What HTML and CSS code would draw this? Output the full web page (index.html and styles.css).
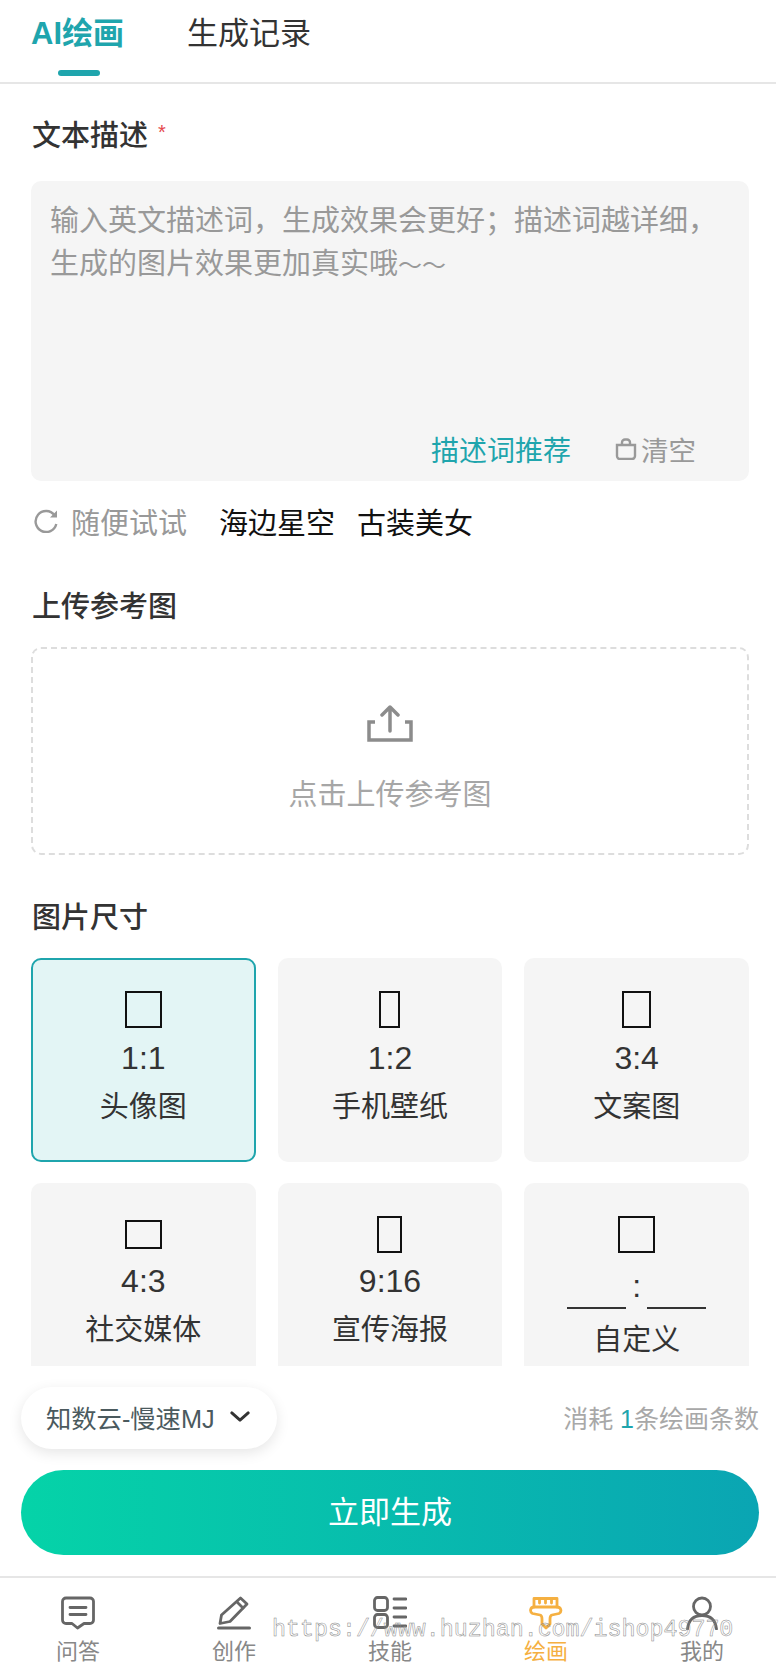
FILE: index.html
```html
<!DOCTYPE html>
<html lang="zh-CN">
<head>
    <meta charset="UTF-8">
    <meta name="viewport" content="width=device-width, initial-scale=1.0">
    <title>AI绘画</title>
    <link rel="stylesheet" href="styles.css">
</head>
<body>
    <div class="page">
        <div class="top-tabs">
            <div class="top-tab active">AI绘画</div>
            <div class="top-tab">生成记录</div>
        </div>

        <div class="content">
            <div class="field-label">文本描述 <span class="required">*</span></div>
            <div class="prompt-box">
                <div class="placeholder">输入英文描述词，生成效果会更好；描述词越详细，生成的图片效果更加真实哦<span class="tilde">～～</span></div>
                <div class="prompt-actions">
                    <span class="recommend">描述词推荐</span>
                    <span class="clear">
                        <svg width="22" height="22" viewBox="0 0 22 22" fill="none" stroke="#999" stroke-width="2.400">
                            <path d="M2 7H20V18A3 3 0 0 1 17 21H5A3 3 0 0 1 2 18Z"/>
                            <path d="M7 7V4.500A3 3 0 0 1 10 1.500H12A3 3 0 0 1 15 4.500V7"/>
                        </svg>
                        清空
                    </span>
                </div>
            </div>

            <div class="try-row">
                <svg class="try-icon" width="24" height="24" viewBox="0 0 24 24" fill="none" stroke="#999" stroke-width="2.400">
                    <path d="M20.500 6.200A10.500 10.500 0 1 0 22.300 15"/>
                    <path d="M23 1.500V8.500H16Z" fill="#999" stroke="none"/>
                </svg>
                <span class="try-label">随便试试</span>
                <span class="try-item">海边星空</span>
                <span class="try-item">古装美女</span>
            </div>

            <div class="field-label upload-label">上传参考图</div>
            <div class="upload-box">
                <svg width="46" height="37" viewBox="0 0 46 37" fill="none" stroke="#8c8c8c" stroke-width="3.500" stroke-linecap="round" stroke-linejoin="round">
                    <path d="M8 17H2V35H44V17H38" stroke-linecap="butt" stroke-linejoin="miter"/>
                    <path d="M23 26V2M15 10L23 2L31 10"/>
                </svg>
                <div class="upload-text">点击上传参考图</div>
            </div>

            <div class="field-label size-label">图片尺寸</div>
            <div class="size-grid">
                <div class="size-card selected">
                    <div class="shape-wrap"><div class="shape s1-1"></div></div>
                    <div class="ratio">1:1</div>
                    <div class="size-name">头像图</div>
                </div>
                <div class="size-card">
                    <div class="shape-wrap"><div class="shape s1-2"></div></div>
                    <div class="ratio">1:2</div>
                    <div class="size-name">手机壁纸</div>
                </div>
                <div class="size-card">
                    <div class="shape-wrap"><div class="shape s3-4"></div></div>
                    <div class="ratio">3:4</div>
                    <div class="size-name">文案图</div>
                </div>
                <div class="size-card lower">
                    <div class="shape-wrap"><div class="shape s4-3"></div></div>
                    <div class="ratio">4:3</div>
                    <div class="size-name">社交媒体</div>
                </div>
                <div class="size-card lower">
                    <div class="shape-wrap"><div class="shape s9-16"></div></div>
                    <div class="ratio">9:16</div>
                    <div class="size-name">宣传海报</div>
                </div>
                <div class="size-card">
                    <div class="shape-wrap"><div class="shape s1-1"></div></div>
                    <div class="custom-ratio">
                        <span class="custom-input"></span>
                        <span class="custom-colon">:</span>
                        <span class="custom-input"></span>
                    </div>
                    <div class="size-name custom-name">自定义</div>
                </div>
            </div>
        </div>

        <div class="generate-panel">
            <div class="panel-row">
                <div class="model-select">
                    <span>知数云-慢速MJ</span>
                    <svg width="20" height="12" viewBox="0 0 22 13" fill="none" stroke="#333" stroke-width="3.200" stroke-linecap="round" stroke-linejoin="round">
                        <path d="M2 2L11 10L20 2"/>
                    </svg>
                </div>
                <div class="cost">消耗 <span class="cost-num">1</span>条绘画条数</div>
            </div>
            <div class="generate-btn">立即生成</div>
        </div>

        <div class="bottom-nav">
            <div class="nav-item">
                <svg width="34" height="34" viewBox="0 0 34 34" fill="none" stroke="#666" stroke-width="2.800" stroke-linejoin="round" stroke-linecap="round">
                    <path d="M5 2H29A3.500 3.500 0 0 1 32.500 5.500V24A3.500 3.500 0 0 1 29 27.500H23L16.500 32L11 27.500H5A3.500 3.500 0 0 1 1.500 24V5.500A3.500 3.500 0 0 1 5 2Z"/>
                    <path d="M9 11.500H25M9 18.500H25"/>
                </svg>
                <span>问答</span>
            </div>
            <div class="nav-item">
                <svg width="34" height="34" viewBox="0 0 34 34" fill="none" stroke="#666" stroke-width="2.800" stroke-linejoin="round" stroke-linecap="round">
                    <path d="M23.500 2L30 8L13 25.500L3 27.500L4.500 19Z"/>
                    <path d="M20 6L26 12"/>
                    <path d="M1.500 32H32.500" stroke-width="3"/>
                </svg>
                <span>创作</span>
            </div>
            <div class="nav-item">
                <svg width="34" height="34" viewBox="0 0 34 34" fill="none" stroke="#666" stroke-width="2.800" stroke-linejoin="round" stroke-linecap="round">
                    <rect x="1.500" y="1.500" width="13" height="13" rx="3"/>
                    <rect x="1.500" y="18.500" width="13" height="13" rx="3"/>
                    <path d="M21 3H33M21 12H33M21 21H33M21 30H33"/>
                </svg>
                <span>技能</span>
            </div>
            <div class="nav-item active">
                <svg width="34" height="34" viewBox="0 0 34 34" fill="none" stroke="#f5b041" stroke-width="2.800" stroke-linejoin="round" stroke-linecap="round">
                    <path d="M5 2.500H28V11H5Z"/>
                    <path d="M10.500 2.500V7M16.500 2.500V7M22.500 2.500V7"/>
                    <path d="M5 11C1 11 0.500 16 3.500 17.500L11 19C13 19.500 13 21 13 23V28L17 32L21 28V23C21 21 21 19.500 23 19L30 17.500C33 16 32.500 11 28 11"/>
                </svg>
                <span>绘画</span>
            </div>
            <div class="nav-item">
                <svg width="34" height="34" viewBox="0 0 34 34" fill="none" stroke="#666" stroke-width="2.800" stroke-linejoin="round" stroke-linecap="round">
                    <circle cx="17" cy="10.500" r="8.500"/>
                    <path d="M2.500 33C3.500 24 9 19.500 17 19.500C25 19.500 30.500 24 31.500 33"/>
                </svg>
                <span>我的</span>
            </div>
        </div>

        <div class="watermark">https://www.huzhan.com/ishop49770</div>
    </div>
</body>
</html>
```

FILE: styles.css
```css
:root {
    --primary-color: #1fa5ad;
    --card-color: #f5f5f5;
}

* {
    box-sizing: border-box;
}

body {
    margin: 0;
    font-family: "Liberation Sans", "Noto Sans CJK SC", sans-serif;
    color: #333;
    background: #fff;
}

.page {
    position: relative;
    width: 776px;
    height: 1680px;
    display: flex;
    flex-direction: column;
    overflow: hidden;
}

.top-tabs {
    display: flex;
    gap: 63px;
    height: 84px;
    padding: 13px 0 0 31px;
    border-bottom: 2px solid #e6e6e6;
    flex-shrink: 0;
}

.top-tab {
    position: relative;
    font-size: 31px;
    line-height: 42px;
}

.top-tab.active {
    color: var(--primary-color);
    font-weight: 700;
}

.top-tab.active::after {
    content: "";
    position: absolute;
    left: 27px;
    top: 57px;
    width: 42px;
    height: 6px;
    border-radius: 3px;
    background: var(--primary-color);
}

.content {
    flex: 1;
    min-height: 0;
    overflow: hidden;
    padding: 0 27px 0 31px;
}

.field-label {
    padding-left: 1px;
    font-size: 29px;
    font-weight: 500;
    line-height: 40px;
    margin-top: 28px;
}

.required {
    color: #e5484d;
    font-size: 20px;
    vertical-align: 7px;
    margin-left: 2px;
}

.prompt-box {
    height: 300px;
    margin-top: 25px;
    padding: 19px 19px 0;
    background: var(--card-color);
    border-radius: 10px;
    display: flex;
    flex-direction: column;
    justify-content: space-between;
}

.placeholder {
    font-size: 29px;
    line-height: 43px;
    color: #999;
}

.tilde {
    font-size: 24px;
}

.prompt-actions {
    display: flex;
    justify-content: flex-end;
    align-items: center;
    gap: 44px;
    height: 40px;
    margin-bottom: 12px;
    padding-right: 34px;
    font-size: 28px;
}

.recommend {
    color: var(--primary-color);
}

.clear {
    display: flex;
    align-items: center;
    gap: 4px;
    font-size: 27.500px;
    color: #999;
}

.try-row {
    display: flex;
    align-items: center;
    height: 40px;
    margin-top: 20px;
    padding-left: 3px;
    font-size: 29px;
}

.try-icon {
    margin-right: 13px;
}

.try-label {
    color: #999;
    margin-right: 32px;
}

.try-item {
    color: #111;
    margin-right: 22px;
}

.upload-label {
    margin-top: 46px;
}

.upload-box {
    height: 208px;
    margin-top: 20px;
    border: 2px dashed #ddd;
    border-radius: 10px;
    display: flex;
    flex-direction: column;
    align-items: center;
    padding-top: 56px;
}

.upload-text {
    margin-top: 33px;
    font-size: 29px;
    line-height: 40px;
    color: #a6a6a6;
}

.size-label {
    margin-top: 43px;
}

.size-grid {
    display: grid;
    grid-template-columns: repeat(3, 1fr);
    gap: 21px 22px;
    margin-top: 20px;
}

.size-card {
    height: 204px;
    padding-top: 33px;
    background: var(--card-color);
    border-radius: 10px;
    text-align: center;
}

.size-card.selected {
    background: #e3f5f5;
    border: 2px solid var(--primary-color);
    padding-top: 31px;
}

.shape-wrap {
    height: 37px;
    display: flex;
    justify-content: center;
    align-items: center;
}

.shape {
    border: 2px solid #111;
}

.s1-1 { width: 37px; height: 37px; }
.s1-2 { width: 21px; height: 37px; }
.s3-4 { width: 29px; height: 37px; }
.s4-3 { width: 37px; height: 29px; }
.s9-16 { width: 25px; height: 37px; }

.ratio {
    margin-top: 9px;
    font-size: 32px;
    line-height: 42px;
}

.size-card.lower .ratio {
    margin-top: 7px;
}

.size-name {
    margin-top: 8px;
    font-size: 29px;
    line-height: 40px;
}

.custom-ratio {
    display: flex;
    justify-content: center;
    align-items: flex-end;
    height: 56px;
}

.custom-input {
    width: 59px;
    border-bottom: 2px solid #333;
}

.custom-colon {
    width: 21px;
    font-size: 32px;
    line-height: 42px;
    margin-bottom: 2px;
}

.custom-name {
    margin-top: 11px;
}

.generate-panel {
    flex-shrink: 0;
    height: 212px;
    padding: 21px 17px 0 21px;
    background: #fff;
    border-bottom: 2px solid #e6e6e6;
}

.panel-row {
    display: flex;
    justify-content: space-between;
    align-items: center;
    height: 62px;
}

.model-select {
    display: flex;
    align-items: center;
    gap: 15px;
    width: 256px;
    height: 62px;
    padding: 0 0 2px 25px;
    border-radius: 31px;
    background: #fff;
    box-shadow: 0 4px 14px rgba(0,0,0,0.1);
    font-size: 25.300px;
    color: #4b5a5e;
}

.cost {
    padding-bottom: 2px;
    font-size: 25px;
    color: #a8a8a8;
}

.cost-num {
    color: var(--primary-color);
}

.generate-btn {
    height: 85px;
    margin-top: 21px;
    border-radius: 43px;
    background: linear-gradient(90deg, #05d3a8, #0aa5b3);
    color: #fff;
    font-size: 31px;
    line-height: 85px;
    text-align: center;
}

.bottom-nav {
    flex-shrink: 0;
    height: 102px;
    display: grid;
    grid-template-columns: repeat(5, 156px);
}

.nav-item {
    display: flex;
    flex-direction: column;
    align-items: center;
    padding-top: 18px;
    font-size: 22px;
    line-height: 30px;
    color: #888;
}

.nav-item span {
    margin-top: 7px;
}

.nav-item.active {
    color: #f5b041;
}

.watermark {
    position: absolute;
    left: 272px;
    top: 1616px;
    font-family: "Liberation Mono", monospace;
    font-size: 23.300px;
    line-height: 28px;
    color: transparent;
    -webkit-text-stroke: 0.500px #888;
    white-space: nowrap;
}
```
